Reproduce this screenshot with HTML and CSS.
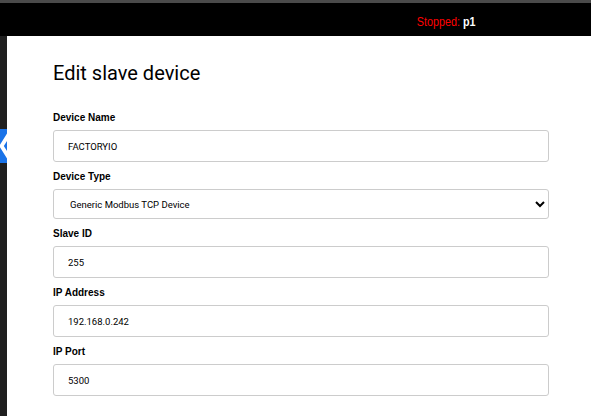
FILE: index.html
```html
<!doctype html>
<html lang="en">
<head>
  <meta charset="utf-8">
  <title>Edit slave device</title>
  <link rel="stylesheet" href="styles.css">
</head>
<body>
<header class="topbar">
  <span class="status">Stopped: <b>p1</b></span>
</header>

<div class="workspace">
  <button class="side-tab" aria-label="Back">
    <svg width="7" height="34" viewBox="0 0 7 34">
      <rect width="7" height="34" fill="#1a73e8"/>
      <polyline points="9,5 1.5,17 9,29" fill="none" stroke="#fff" stroke-width="4"/>
    </svg>
  </button>

  <section class="panel">
    <h1>Edit slave device</h1>
    <form class="device-form">
      <div class="field">
        <label for="name">Device Name</label>
        <input id="name" type="text" value="FACTORYIO">
      </div>
      <div class="field">
        <label for="type">Device Type</label>
        <select id="type">
          <option selected>Generic Modbus TCP Device</option>
          <option>Generic Modbus RTU Device</option>
        </select>
      </div>
      <div class="field">
        <label for="slave">Slave ID</label>
        <input id="slave" type="text" value="255">
      </div>
      <div class="field">
        <label for="ip">IP Address</label>
        <input id="ip" type="text" value="192.168.0.242">
      </div>
      <div class="field">
        <label for="port">IP Port</label>
        <input id="port" type="text" value="5300">
      </div>
    </form>
  </section>
</div>
</body>
</html>
```

FILE: styles.css
```css
:root {
  --bg: #1f1f1f;
  --border: #cccccc;
  --stopped: #ff0000;
}
* {
  box-sizing: border-box;
}
body {
  margin: 0;
  background: var(--bg);
  font-family: Roboto, sans-serif;
  color: #000;
  height: 416px;
  overflow: hidden;
}
.topbar {
  height: 36px;
  border-top: 3px solid #4a4a4a;
  background: #000;
  display: flex;
  justify-content: flex-end;
  align-items: center;
  padding-right: 115px;
  padding-top: 3px;
}
.status {
  display: inline-block;
  font-family: "Liberation Sans", Arial, sans-serif;
  font-size: 13.5px;
  color: var(--stopped);
  transform: scaleX(0.8);
  transform-origin: right center;
}
.status b {
  color: #fff;
}
.workspace {
  position: relative;
  display: flex;
  height: 380px;
}
.side-tab {
  position: absolute;
  left: 0;
  top: 93px;
  width: 7px;
  height: 34px;
  padding: 0;
  border: none;
  background: none;
  display: block;
}
.side-tab svg {
  display: block;
}
.panel {
  flex: 1;
  margin-left: 7px;
  background: #fff;
  padding: 25px 42px 0 46px;
}
h1 {
  margin: 0 0 25px;
  font-size: 20px;
  line-height: 24px;
  font-weight: 400;
}
.device-form {
  display: flex;
  flex-direction: column;
  gap: 7px;
}
label {
  display: block;
  font-family: "Liberation Sans", Arial, sans-serif;
  font-weight: 700;
  font-size: 10px;
  line-height: 16px;
  margin-bottom: 4px;
}
input, select {
  display: block;
  width: 100%;
  height: 32px;
  border: 1px solid var(--border);
  border-radius: 3px;
  padding: 0 14px;
  font-family: Roboto, sans-serif;
  font-size: 9.5px;
  color: #000;
  background: #fff;
}
select {
  height: 30px;
  padding-left: 12px;
}
```
